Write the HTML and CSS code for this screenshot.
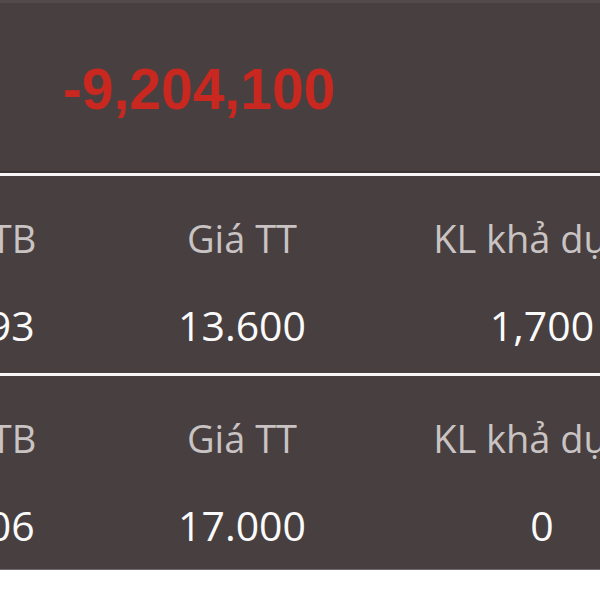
FILE: index.html
```html
<!DOCTYPE html>
<html lang="vi">
<head>
  <meta charset="UTF-8" />
  <title>Danh mục</title>
  <link rel="stylesheet" href="styles.css">
</head>
<body>

  <div class="summary">
    <span class="pnl">-9,204,100</span>
  </div>

  <div class="holding">
    <div class="cols labels">
      <div>Giá vốn TB</div>
      <div>Giá TT</div>
      <div>KL khả dụng</div>
    </div>
    <div class="cols values">
      <div>16,426.93</div>
      <div>13.600</div>
      <div>1,700</div>
    </div>
  </div>

  <div class="holding last">
    <div class="cols labels">
      <div>Giá vốn TB</div>
      <div>Giá TT</div>
      <div>KL khả dụng</div>
    </div>
    <div class="cols values">
      <div>21,108.06</div>
      <div>17.000</div>
      <div>0</div>
    </div>
  </div>

</body>
</html>
```

FILE: styles.css
```css
html, body {
  margin: 0;
  background: #fff;
  overflow: hidden;
}

body {
  font-family: "Open Sans", "Noto Sans", sans-serif;
  width: 600px;
}

.summary {
  background: #473f40;
  border-top: 3px solid #524a4b;
  border-bottom: 2px solid #3b3435;
  padding: 53px 0 49px 63px;
}

.pnl {
  display: block;
  font-family: "Liberation Sans", Arial, sans-serif;
  font-weight: bold;
  font-size: 57px;
  line-height: 66px;
  color: #c8281f;
}

.holding {
  background: #473f40;
  border-top: 3px solid #f7f5f5;
  padding: 37px 0 23px;
}

.holding.last {
  padding-bottom: 19px;
  border-bottom: 1px solid #6e6869;
}

.cols {
  display: grid;
  grid-template-columns: 300px 300px 300px;
  margin-left: -208px;
  text-align: center;
  white-space: nowrap;
}

.labels {
  font-size: 38px;
  line-height: 50px;
  color: #c9c3c3;
}

.values {
  margin-top: 37px;
  font-size: 41px;
  line-height: 50px;
  font-weight: 500;
  color: #fbfafa;
}
```
